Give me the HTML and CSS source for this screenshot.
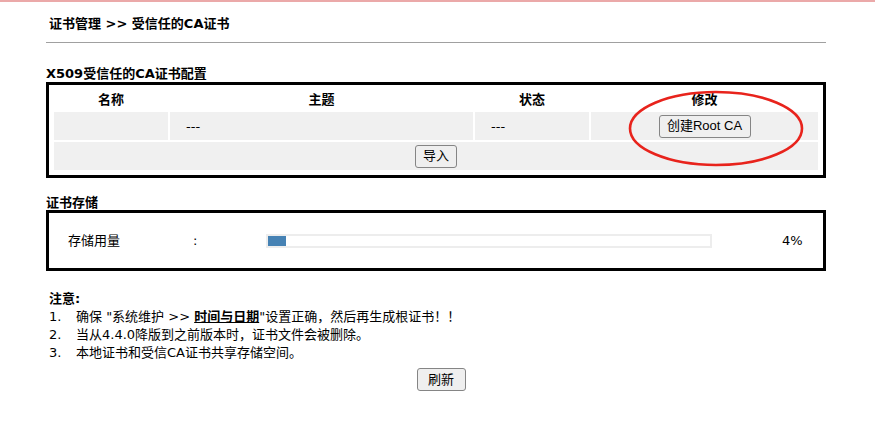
FILE: index.html
```html
<!DOCTYPE html>
<html lang="zh-CN">
<head>
<meta charset="utf-8">
<title>受信任的CA证书</title>
<link rel="stylesheet" href="styles.css">
</head>
<body>
<div class="page">
  <div class="crumb">证书管理 &gt;&gt; 受信任的CA证书</div>
  <div class="rule"></div>

  <div class="sec-title first">X509受信任的CA证书配置</div>
  <div class="box">
    <table class="ca-table">
      <colgroup>
        <col class="c1"><col class="c2"><col class="c3"><col class="c4">
      </colgroup>
      <tr class="head">
        <th>名称</th><th>主题</th><th>状态</th><th>修改</th>
      </tr>
      <tr class="row">
        <td></td>
        <td class="dash">---</td>
        <td class="dash">---</td>
        <td class="center"><button class="btn btn-root">创建Root CA</button></td>
      </tr>
      <tr class="row">
        <td colspan="4" class="center"><button class="btn">导入</button></td>
      </tr>
    </table>
  </div>

  <div class="sec-title second">证书存储</div>
  <div class="box storage">
    <div class="st-label">存储用量</div>
    <div class="st-colon">:</div>
    <div class="bar"><div class="bar-fill" style="width:4%"></div></div>
    <div class="st-pct">4%</div>
  </div>

  <div class="notes">
    <div class="notes-title">注意:</div>
    <div class="note"><span class="num">1.</span><span>确保 "系统维护 &gt;&gt; <b class="link">时间与日期</b>"设置正确，然后再生成根证书！！</span></div>
    <div class="note"><span class="num">2.</span><span>当从4.4.0降版到之前版本时，证书文件会被删除。</span></div>
    <div class="note"><span class="num">3.</span><span>本地证书和受信CA证书共享存储空间。</span></div>
  </div>

  <div class="actions"><button class="btn btn-refresh">刷新</button></div>

  <svg class="mark" width="180" height="82" viewBox="0 0 180 82">
    <ellipse cx="90" cy="40.5" rx="86" ry="36.5" fill="none" stroke="#e8231c" stroke-width="2.6"/>
  </svg>
</div>
</body>
</html>
```

FILE: styles.css
```css
html, body {
  margin: 0;
  padding: 0;
  background: #ffffff;
}
body {
  border-top: 2px solid #eba9a9;
  font-family: "DejaVu Sans", "Noto Sans CJK SC", sans-serif;
  font-size: 13px;
  color: #000000;
}
.page {
  position: relative;
  width: 780px;
  padding-left: 46px;
  padding-top: 13px;
}
.crumb {
  padding-left: 3px;
  line-height: 18px;
  height: 18px;
  font-weight: bold;
}
.rule {
  margin-top: 9px;
  height: 1px;
  background: #a0a0a0;
}
.sec-title {
  font-weight: bold;
  line-height: 16px;
  height: 16px;
}
.sec-title.first {
  margin-top: 23px;
}
.sec-title.second {
  margin-top: 17px;
  height: 15px;
  line-height: 15px;
}
.box {
  border: 3px solid #000000;
  padding: 3px;
}
.ca-table {
  width: 768px;
  border-spacing: 2px;
  table-layout: fixed;
}
.ca-table col.c1 { width: 114px; }
.ca-table col.c2 { width: 303px; }
.ca-table col.c3 { width: 114px; }
.ca-table col.c4 { width: 227px; }
.ca-table th, .ca-table td {
  padding: 0;
}
.ca-table .head th {
  height: 20px;
  font-weight: bold;
  text-align: center;
  vertical-align: middle;
  line-height: 16px;
}
.ca-table .row td {
  height: 28px;
  background: #f0f0f0;
  vertical-align: middle;
}
.ca-table td.dash {
  padding-left: 16px;
}
.ca-table td.center {
  text-align: center;
}
.btn {
  height: 23px;
  box-sizing: border-box;
  padding: 0 7px;
  border: 1px solid #858585;
  border-radius: 3px;
  background: #efefef;
  font-family: "Liberation Sans", "Noto Sans CJK SC", sans-serif;
  font-size: 13px;
  line-height: 20px;
  color: #000000;
  vertical-align: middle;
}
.btn-root {
  width: 92px;
  padding: 0;
}
.btn-refresh {
  width: 49px;
  padding: 0;
}
.storage {
  padding: 0 0 0 19px;
  height: 55px;
  display: grid;
  grid-template-columns: 125px 73px 446px auto;
  align-items: center;
}
.st-label, .st-colon, .st-pct {
  line-height: 16px;
}
.st-pct {
  padding-left: 70px;
}
.bar {
  height: 14px;
  box-sizing: border-box;
  border: 2px solid #ededed;
  background: #ffffff;
}
.bar-fill {
  height: 10px;
  background: #4682b4;
}
.notes {
  margin-top: 19px;
  padding-left: 3px;
}
.notes-title {
  font-weight: bold;
  line-height: 18px;
}
.note {
  display: grid;
  grid-template-columns: 27px auto;
  line-height: 18px;
}
.note .link {
  text-decoration: underline;
}
.actions {
  margin-top: 6px;
  display: flex;
  justify-content: center;
  width: 790px;
}
.mark {
  position: absolute;
  left: 626px;
  top: 86px;
}
```
